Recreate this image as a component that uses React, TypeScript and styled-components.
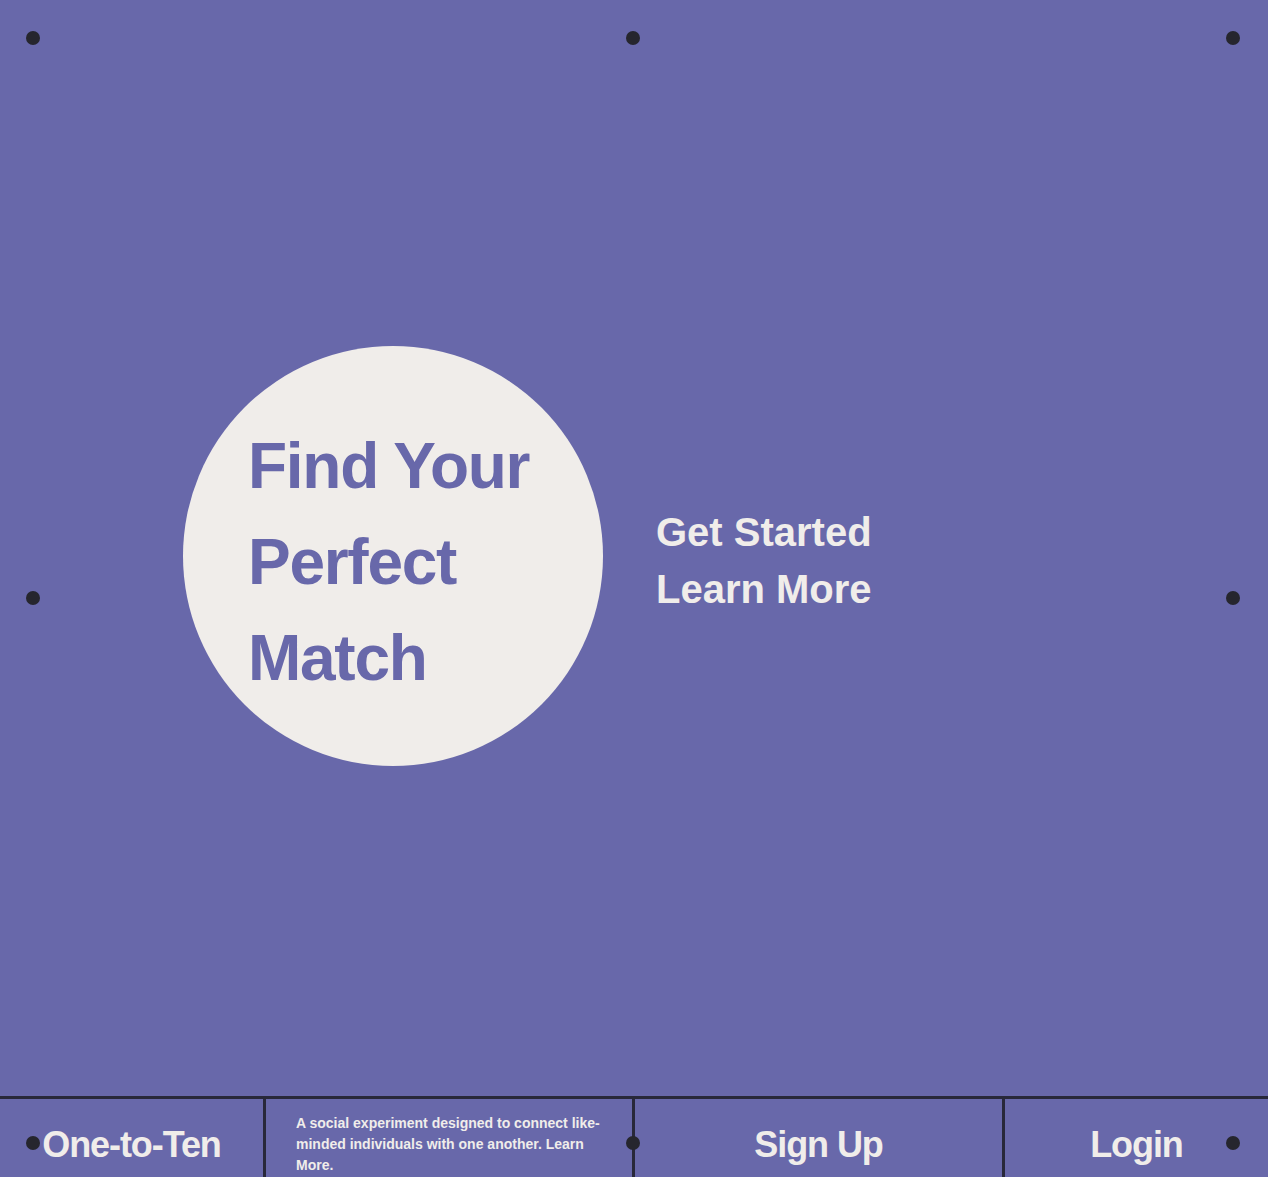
import React from "react";
import styled, { createGlobalStyle } from "styled-components";

const GlobalStyle = createGlobalStyle`
  * { box-sizing: border-box; }
  html, body { margin: 0; padding: 0; background: #6868aa; }
  body { font-family: "Liberation Sans", Arial, sans-serif; color: #f0edea; }
`;

const Page = styled.div`
  position: relative;
  width: 1268px;
  background: #6868aa;
`;

const Hero = styled.section`
  height: 1096px;
  display: flex;
  align-items: center;
  gap: 53px;
  padding: 16px 0 0 183px;
`;

const Circle = styled.div`
  width: 420px;
  height: 420px;
  border-radius: 50%;
  background: #f0edea;
  display: flex;
  align-items: center;
  padding: 12px 0 0 65px;
`;

const Title = styled.h1`
  margin: 0;
  font-size: 64px;
  line-height: 96px;
  font-weight: 700;
  color: #6868aa;
  letter-spacing: -0.02em;
`;

const Links = styled.nav`
  display: flex;
  flex-direction: column;
  padding-top: 10px;
`;

const HeroLink = styled.a`
  font-size: 40px;
  line-height: 57px;
  font-weight: 700;
  color: #f0edea;
  text-decoration: none;
`;

const Footer = styled.footer`
  display: grid;
  grid-template-columns: 263px 369px 370px 1fr;
  border-top: 3px solid #28283a;
`;

const Cell = styled.div<{ $divider?: boolean; $align?: "center" | "start" }>`
  display: flex;
  align-items: center;
  justify-content: ${(p) => (p.$align === "start" ? "flex-start" : "center")};
  padding: 14px 30px;
  border-left: ${(p) => (p.$divider ? "3px solid #28283a" : "none")};
`;

const BigText = styled.span`
  font-size: 36px;
  line-height: 54px;
  font-weight: 700;
  letter-spacing: -0.03em;
  color: #f0edea;
`;

const Description = styled.p`
  margin: 0;
  font-size: 14px;
  line-height: 21px;
  font-weight: 700;
  color: #f0edea;
`;

const Dot = styled.span<{ $x: number; $y: number }>`
  position: absolute;
  left: ${(p) => p.$x - 7}px;
  top: ${(p) => p.$y - 7}px;
  width: 14px;
  height: 14px;
  border-radius: 50%;
  background: #26262e;
  pointer-events: none;
`;

const dots: Array<[number, number]> = [
  [33, 38],
  [633, 38],
  [1233, 38],
  [33, 598],
  [1233, 598],
  [33, 1143],
  [633, 1143],
  [1233, 1143],
];

export default function App() {
  return (
    <>
      <GlobalStyle />
      <Page>
        <Hero>
          <Circle>
            <Title>
              Find Your
              <br />
              Perfect
              <br />
              Match
            </Title>
          </Circle>
          <Links>
            <HeroLink href="#">Get Started</HeroLink>
            <HeroLink href="#">Learn More</HeroLink>
          </Links>
        </Hero>
        <Footer>
          <Cell>
            <BigText>One-to-Ten</BigText>
          </Cell>
          <Cell $divider $align="start">
            <Description>
              A social experiment designed to connect like-minded individuals
              with one another. Learn More.
            </Description>
          </Cell>
          <Cell $divider>
            <BigText>Sign Up</BigText>
          </Cell>
          <Cell $divider>
            <BigText>Login</BigText>
          </Cell>
        </Footer>
        {dots.map(([x, y]) => (
          <Dot key={`${x}-${y}`} $x={x} $y={y} />
        ))}
      </Page>
    </>
  );
}
